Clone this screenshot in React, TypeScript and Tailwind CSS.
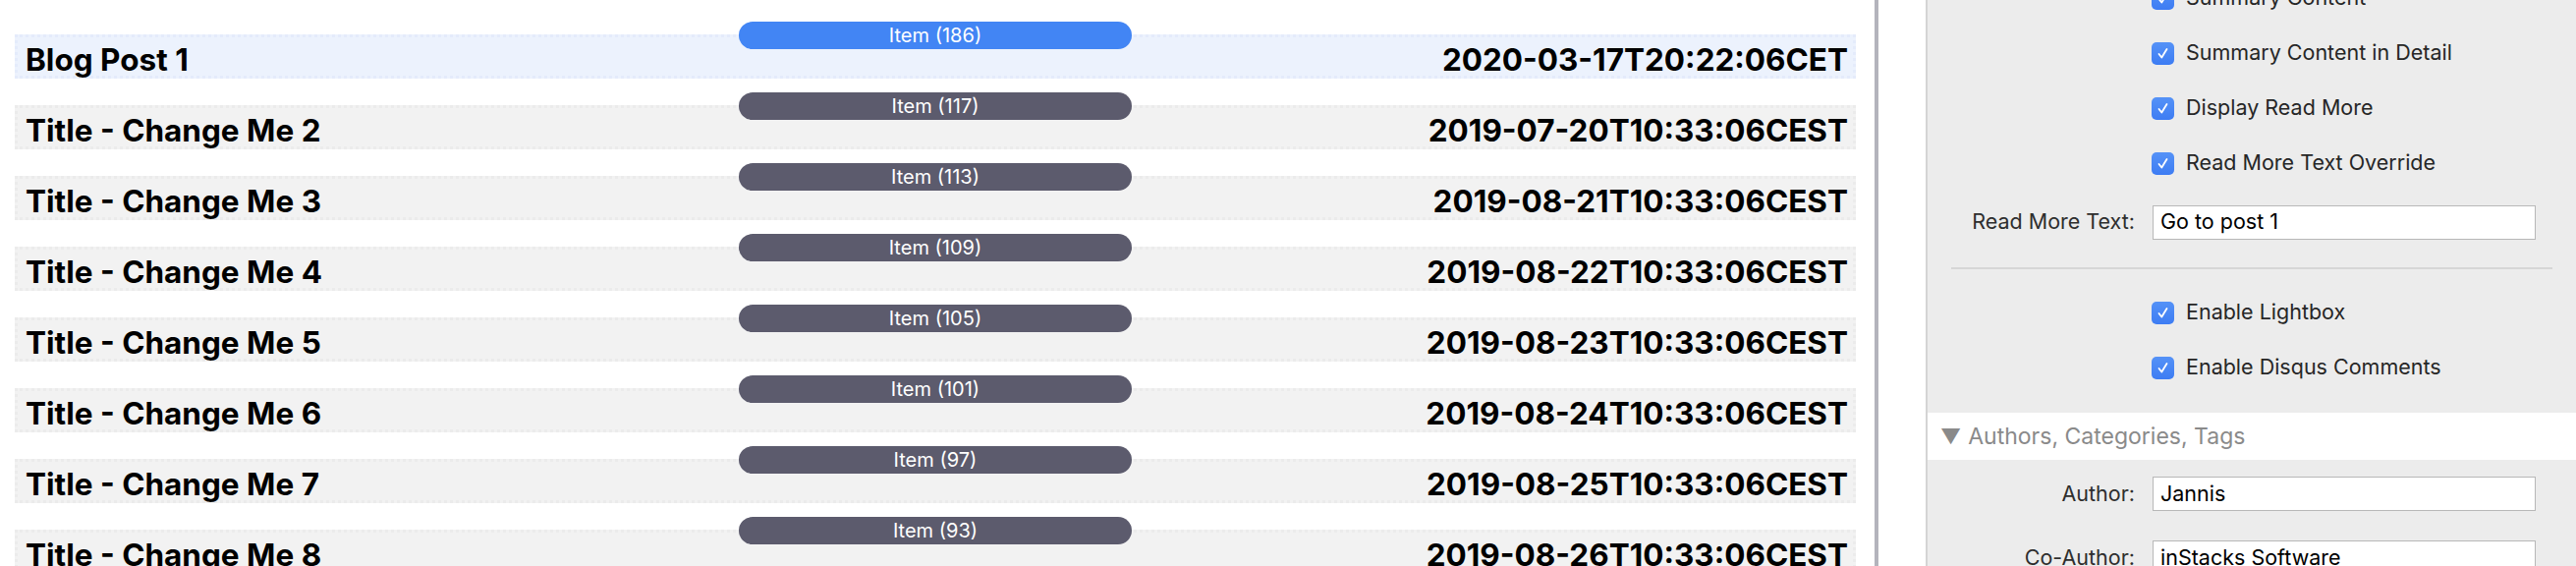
import React from 'react'

type Post = {
  title: string
  count: number
  date: string
  selected?: boolean
}

const posts: Post[] = [
  { title: 'Blog Post 1', count: 186, date: '2020-03-17T20:22:06CET', selected: true },
  { title: 'Title - Change Me 2', count: 117, date: '2019-07-20T10:33:06CEST' },
  { title: 'Title - Change Me 3', count: 113, date: '2019-08-21T10:33:06CEST' },
  { title: 'Title - Change Me 4', count: 109, date: '2019-08-22T10:33:06CEST' },
  { title: 'Title - Change Me 5', count: 105, date: '2019-08-23T10:33:06CEST' },
  { title: 'Title - Change Me 6', count: 101, date: '2019-08-24T10:33:06CEST' },
  { title: 'Title - Change Me 7', count: 97, date: '2019-08-25T10:33:06CEST' },
  { title: 'Title - Change Me 8', count: 93, date: '2019-08-26T10:33:06CEST' },
]

const sysFont = { fontFamily: 'Inter, "Noto Sans", sans-serif' }

function PostRow({ post }: { post: Post }) {
  return (
    <div className="relative flex h-[72px] shrink-0 flex-col pt-[13px]">
      {/* Item badge sits over the top edge of the row */}
      <div
        className={`absolute left-1/2 top-0 z-10 flex h-[28px] w-[400px] -translate-x-1/2 items-center justify-center rounded-full text-[20px] leading-none text-white ${
          post.selected ? 'bg-[#4285f4]' : 'bg-[#5c5b6d]'
        }`}
      >
        Item ({post.count})
      </div>
      <div
        className={`flex h-[45px] shrink-0 items-start justify-between border-[3px] border-dotted pl-[8px] pr-[5px] pt-[7px] ${
          post.selected
            ? 'border-[#e4ebfb] bg-[#ecf2fd]'
            : 'border-[#ebebeb] bg-[#f2f2f2]'
        }`}
      >
        <span className="whitespace-nowrap text-[31.5px] font-bold leading-[32px] text-black">
          {post.title}
        </span>
        <span className="whitespace-nowrap text-[31.5px] font-bold leading-[32px] text-black">
          {post.date}
        </span>
      </div>
    </div>
  )
}

function Check({ label }: { label: string }) {
  return (
    <div className="flex h-[56px] items-center">
      <div className="w-[228px] shrink-0" />
      <div className="flex h-[23px] w-[23px] items-center justify-center rounded-[5px] bg-gradient-to-b from-[#5592f7] to-[#3d7cf3]">
        <svg width="13" height="13" viewBox="0 0 13 13" fill="none">
          <path
            d="M2.5 7 L5.3 10.5 L10.5 2"
            stroke="white"
            strokeWidth="1.8"
            strokeLinecap="round"
            strokeLinejoin="round"
          />
        </svg>
      </div>
      <span className="ml-[12px] text-[21.5px] leading-none text-[#262626]">{label}</span>
    </div>
  )
}

function Field({ label, value, className = '' }: { label: string; value: string; className?: string }) {
  return (
    <div className={`flex items-center ${className}`}>
      <div className="w-[211px] shrink-0 text-right text-[21.5px] leading-none text-[#2e2e2e]">
        {label}
      </div>
      <div className="ml-[18px] flex h-[35px] w-[390px] items-center border-[1.5px] border-[#b8b8b8] bg-white px-[7px] text-[21.5px] leading-none text-black">
        {value}
      </div>
    </div>
  )
}

export default function App() {
  return (
    <div className="flex h-[576px] w-[2622px] overflow-hidden bg-white" style={sysFont}>
      {/* Post list */}
      <div className="flex w-[1908px] shrink-0 flex-col pl-[15px] pr-[19px] pt-[22px]">
        {posts.map((post) => (
          <PostRow key={post.title} post={post} />
        ))}
      </div>

      {/* Splitter */}
      <div className="w-[4px] shrink-0 bg-[#b4b4bc]" />
      <div className="w-[48px] shrink-0 bg-white" />

      {/* Inspector */}
      <div className="flex-1 border-l-2 border-[#d4d4d4] bg-[#ececec]">
        <div className="-mt-[30px]">
          <Check label="Summary Content" />
          <Check label="Summary Content in Detail" />
          <Check label="Display Read More" />
          <Check label="Read More Text Override" />
          <Field label="Read More Text:" value="Go to post 1" className="h-[64px]" />
          <div className="mx-[24px] mt-[14px] h-[2px] bg-[#d6d6d6]" />
          <div className="mt-[16px]">
            <Check label="Enable Lightbox" />
            <Check label="Enable Disqus Comments" />
          </div>
          <div className="mt-[18px] flex h-[48px] items-center bg-white pl-[13px] leading-none text-[#8a8a8a]">
            <span className="text-[21px]">▼</span>
            <span className="ml-[7px] text-[23px]">Authors, Categories, Tags</span>
          </div>
          <Field label="Author:" value="Jannis" className="mt-[17px]" />
          <Field label="Co-Author:" value="inStacks Software" className="mt-[30px]" />
        </div>
      </div>
    </div>
  )
}
